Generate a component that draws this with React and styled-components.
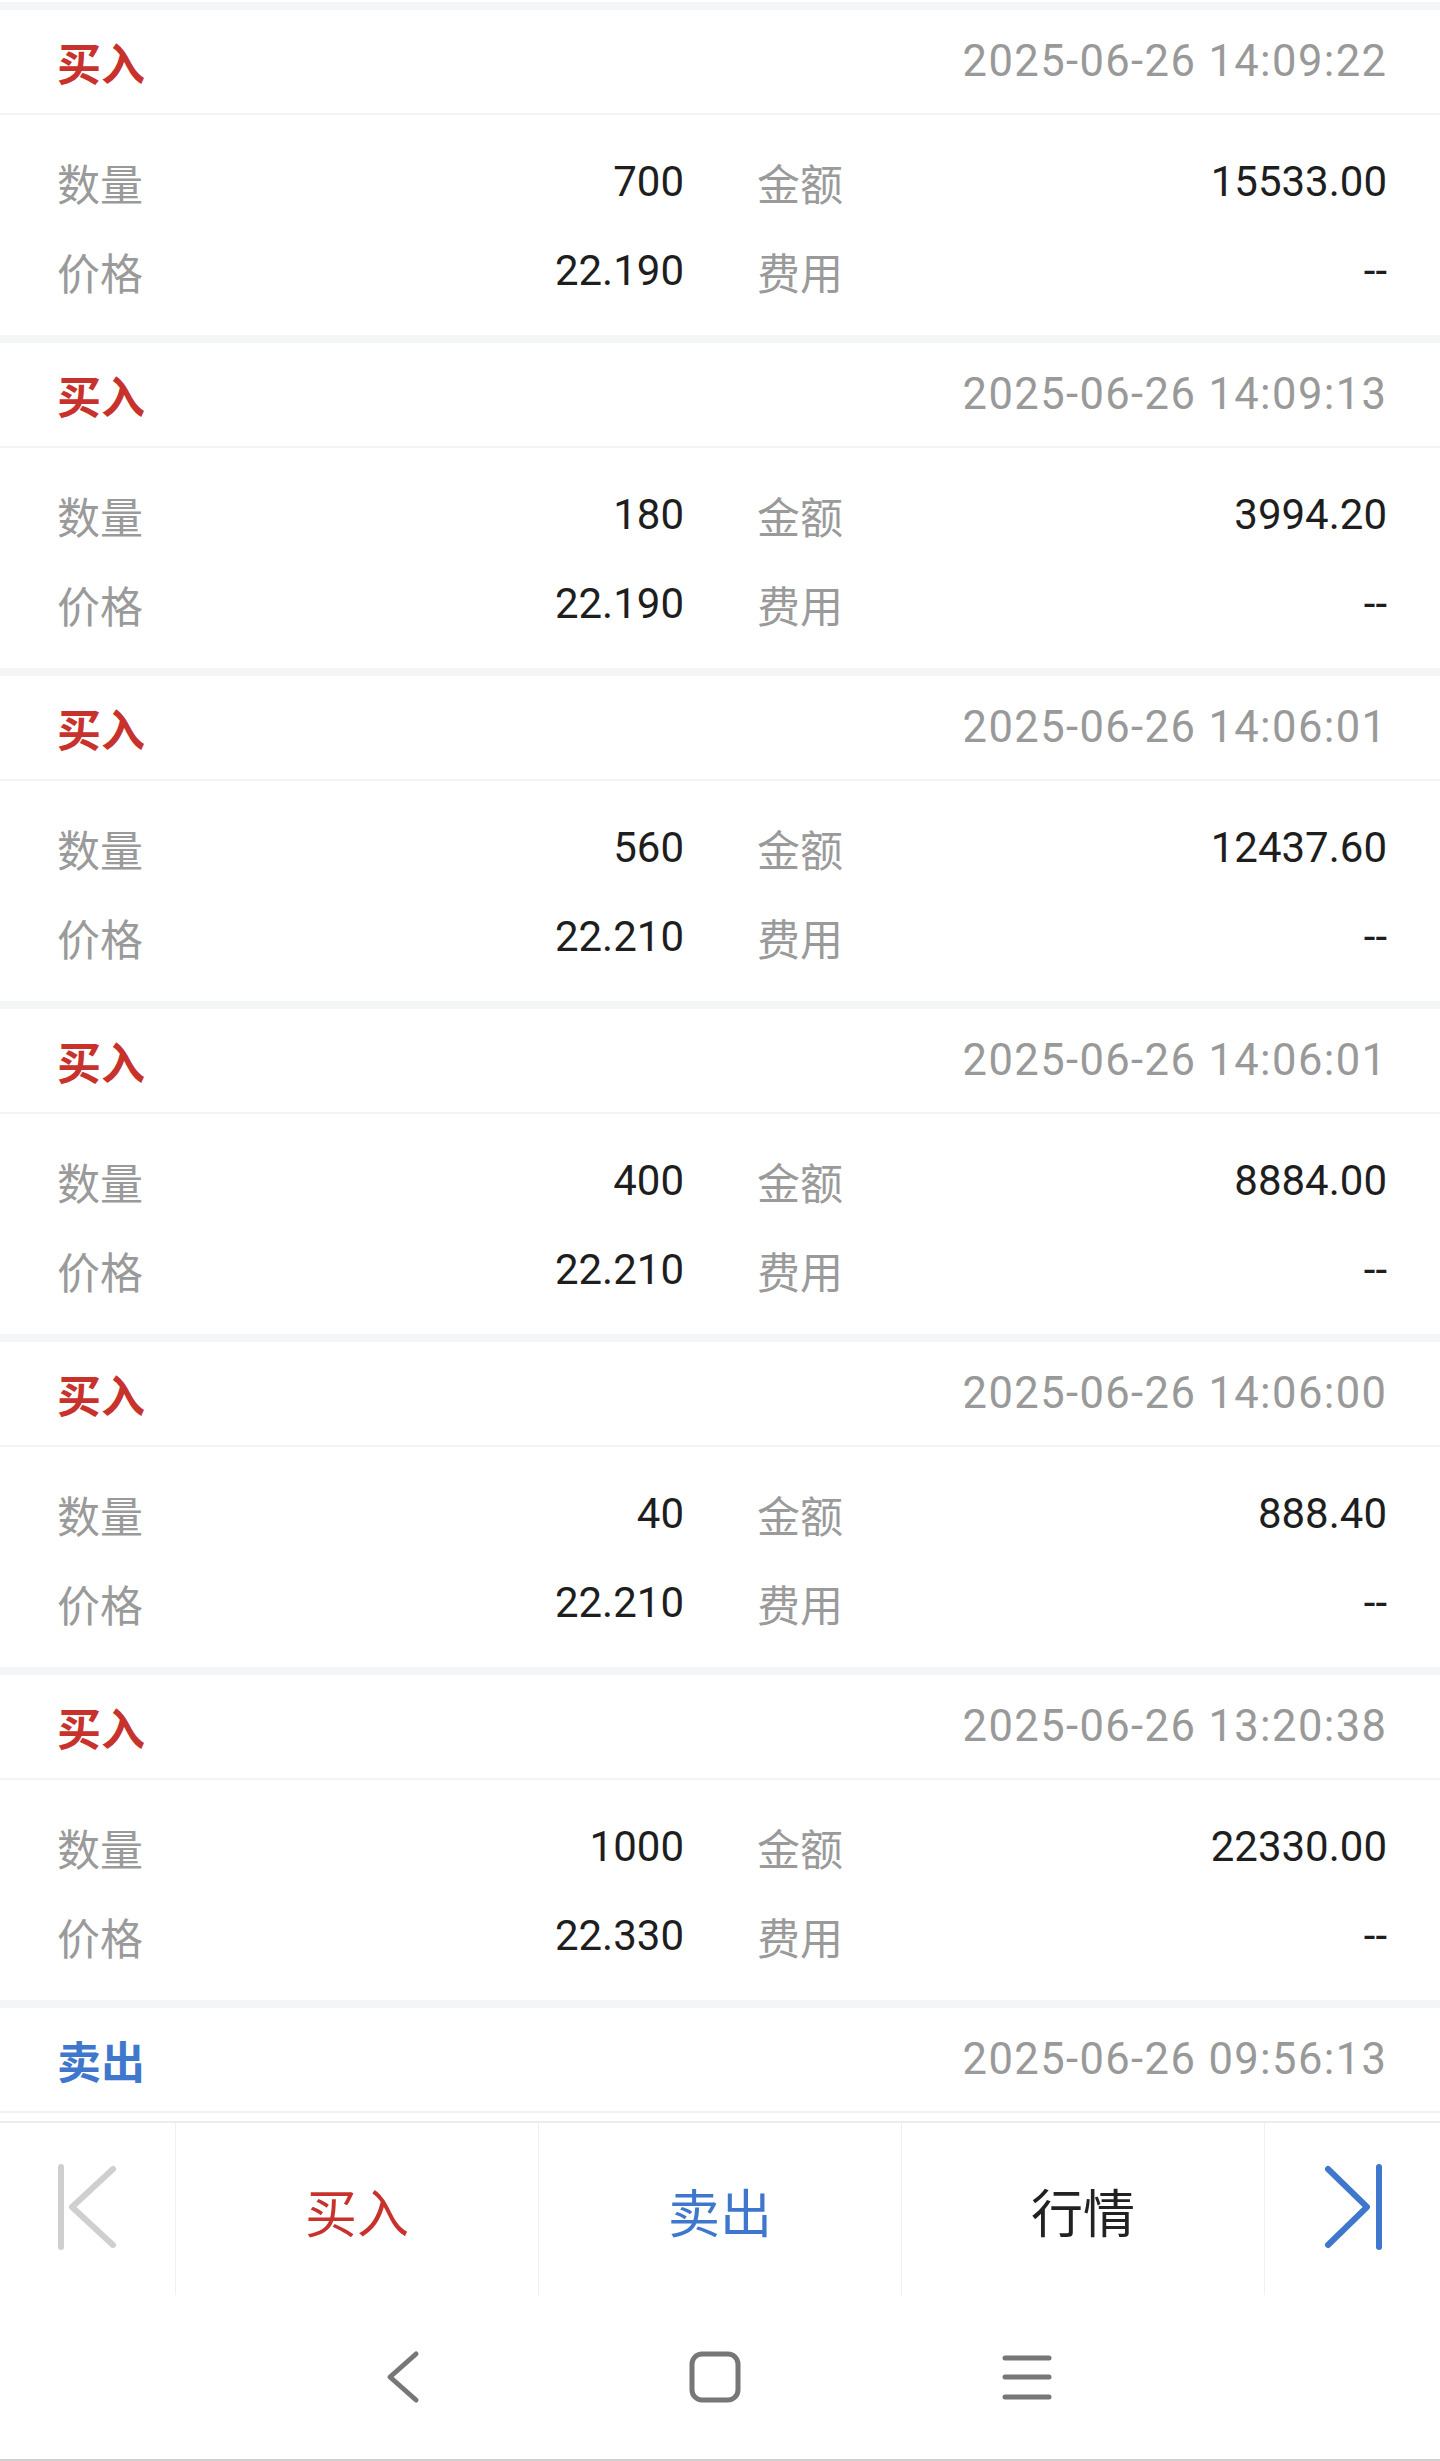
import React from "react"
import styled, { createGlobalStyle } from "styled-components"

const trades = [
  { side: "buy", time: "2025-06-26 14:09:22", qty: "700", amount: "15533.00", price: "22.190", fee: "--" },
  { side: "buy", time: "2025-06-26 14:09:13", qty: "180", amount: "3994.20", price: "22.190", fee: "--" },
  { side: "buy", time: "2025-06-26 14:06:01", qty: "560", amount: "12437.60", price: "22.210", fee: "--" },
  { side: "buy", time: "2025-06-26 14:06:01", qty: "400", amount: "8884.00", price: "22.210", fee: "--" },
  { side: "buy", time: "2025-06-26 14:06:00", qty: "40", amount: "888.40", price: "22.210", fee: "--" },
  { side: "buy", time: "2025-06-26 13:20:38", qty: "1000", amount: "22330.00", price: "22.330", fee: "--" },
  // last row is scrolled under the toolbar, only its header shows
  { side: "sell", time: "2025-06-26 09:56:13" },
]

const RED = "#c8322c"
const BLUE = "#3f77cc"

const GlobalStyle = createGlobalStyle`
  html, body {
    margin: 0;
    padding: 0;
    background: #ffffff;
  }
  body {
    font-family: Roboto, "Noto Sans CJK SC", sans-serif;
  }
`

const TradeCard = ({ trade }) => (
  <Card>
    <CardHeader>
      <Side $side={trade.side}>{trade.side === "buy" ? "买入" : "卖出"}</Side>
      <Time>{trade.time}</Time>
    </CardHeader>
    {trade.qty ? (
      <CardBody>
        <Cell>
          <Label>数量</Label>
          <Value>{trade.qty}</Value>
        </Cell>
        <Cell>
          <Label>金额</Label>
          <Value>{trade.amount}</Value>
        </Cell>
        <Cell>
          <Label>价格</Label>
          <Value>{trade.price}</Value>
        </Cell>
        <Cell>
          <Label>费用</Label>
          <Value>{trade.fee}</Value>
        </Cell>
      </CardBody>
    ) : (
      <CardBody />
    )}
  </Card>
)

const FirstIcon = () => (
  <svg width="60" height="86" viewBox="0 0 60 86" fill="none">
    <line x1="3" y1="3" x2="3" y2="83" stroke="#cfcfcf" strokeWidth="6" strokeLinecap="round" />
    <polyline points="55,5 14,43 55,81" stroke="#cfcfcf" strokeWidth="6" strokeLinecap="round" strokeLinejoin="round" />
  </svg>
)

const LastIcon = () => (
  <svg width="60" height="86" viewBox="0 0 60 86" fill="none">
    <polyline points="5,5 44,43 5,81" stroke={BLUE} strokeWidth="6" strokeLinecap="round" strokeLinejoin="round" />
    <line x1="56" y1="3" x2="56" y2="83" stroke={BLUE} strokeWidth="6" strokeLinecap="round" />
  </svg>
)

const BackIcon = () => (
  <svg width="36" height="54" viewBox="0 0 36 54" fill="none">
    <polyline points="31,4 5,27 31,50" stroke="#777" strokeWidth="5" strokeLinecap="round" strokeLinejoin="round" />
  </svg>
)

const HomeIcon = () => (
  <svg width="54" height="54" viewBox="0 0 54 54" fill="none">
    <rect x="4" y="4" width="46" height="46" rx="10" stroke="#777" strokeWidth="5" />
  </svg>
)

const MenuIcon = () => (
  <svg width="50" height="50" viewBox="0 0 50 50" fill="none">
    <line x1="3" y1="6" x2="47" y2="6" stroke="#777" strokeWidth="5" strokeLinecap="round" />
    <line x1="3" y1="25" x2="47" y2="25" stroke="#777" strokeWidth="5" strokeLinecap="round" />
    <line x1="3" y1="45" x2="47" y2="45" stroke="#777" strokeWidth="5" strokeLinecap="round" />
  </svg>
)

const App = () => (
  <>
    <GlobalStyle />
    <Screen>
      <List>
        {trades.map((t, i) => (
          <TradeCard key={i} trade={t} />
        ))}
      </List>
      <Toolbar>
        <ToolCell>
          <FirstIcon />
        </ToolCell>
        <ToolCell>
          <ToolText $color={RED}>买入</ToolText>
        </ToolCell>
        <ToolCell>
          <ToolText $color={BLUE}>卖出</ToolText>
        </ToolCell>
        <ToolCell>
          <ToolText $color="#222">行情</ToolText>
        </ToolCell>
        <ToolCell>
          <LastIcon />
        </ToolCell>
      </Toolbar>
      <NavBar>
        <NavSlot>
          <BackIcon />
        </NavSlot>
        <NavSlot>
          <HomeIcon />
        </NavSlot>
        <NavSlot>
          <MenuIcon />
        </NavSlot>
      </NavBar>
    </Screen>
  </>
)

const Screen = styled.div`
  width: 1440px;
  height: 2461px;
  display: flex;
  flex-direction: column;
  background: #ffffff;
  overflow: hidden;
`

const List = styled.div`
  height: 2121px;
  flex-shrink: 0;
  overflow: hidden;
  padding-top: 2px;
  box-sizing: border-box;
`

const Card = styled.section`
  border-top: 8px solid #f4f5f7;
  background: #ffffff;
`

const CardHeader = styled.div`
  height: 105px;
  box-sizing: border-box;
  display: flex;
  align-items: center;
  justify-content: space-between;
  padding: 0 54px 0 57px;
  border-bottom: 2px solid #f3f3f3;
`

const Side = styled.span`
  font-family: "Noto Sans CJK SC", sans-serif;
  font-size: 44px;
  font-weight: 700;
  color: ${(p) => (p.$side === "buy" ? RED : BLUE)};
`

const Time = styled.span`
  font-family: Roboto, sans-serif;
  font-size: 43.5px;
  letter-spacing: 1.4px;
  margin-right: -1.4px;
  color: #999999;
`

const CardBody = styled.div`
  height: 220px;
  box-sizing: border-box;
  display: grid;
  grid-template-columns: 627px 630px;
  grid-auto-rows: 89px;
  column-gap: 73px;
  padding: 22px 53px 0 57px;
`

const Cell = styled.div`
  display: flex;
  align-items: center;
  justify-content: space-between;
`

const Label = styled.span`
  font-family: "Noto Sans CJK SC", sans-serif;
  font-size: 43px;
  color: #9a9a9a;
`

const Value = styled.span`
  font-family: Roboto, sans-serif;
  font-size: 42px;
  color: #1e1e1e;
`

const Toolbar = styled.div`
  height: 174px;
  flex-shrink: 0;
  display: grid;
  grid-template-columns: 175px 1fr 1fr 1fr 176px;
  border-top: 2px solid #ececec;
  box-sizing: border-box;
`

const ToolCell = styled.div`
  display: flex;
  align-items: center;
  justify-content: center;
  border-left: 1px solid #f0f0f0;
  padding-bottom: 4px;

  &:first-child {
    border-left: none;
  }
`

const ToolText = styled.span`
  font-family: "Noto Sans CJK SC", sans-serif;
  font-size: 52px;
  color: ${(p) => p.$color};
  padding-top: 6px;
`

const NavBar = styled.div`
  flex: 1;
  display: flex;
  justify-content: center;
  align-items: center;
  padding-right: 10px;
  border-bottom: 2px solid #cfcfcf;
`

const NavSlot = styled.div`
  width: 312px;
  display: flex;
  justify-content: center;
  align-items: center;
`

export default App
